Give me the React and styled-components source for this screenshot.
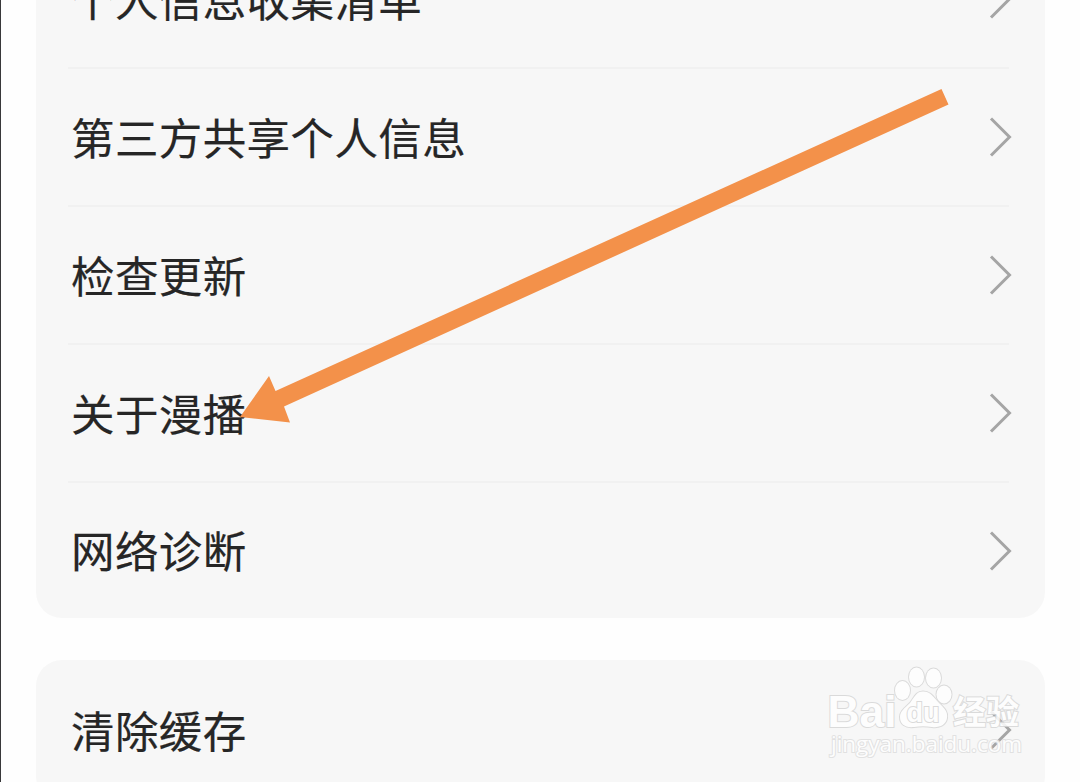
import React from "react";
import styled, { createGlobalStyle } from "styled-components";

const GlobalStyle = createGlobalStyle`
  * {
    box-sizing: border-box;
  }
  body {
    margin: 0;
    background: #fefefe;
    font-family: "Noto Sans CJK SC", sans-serif;
  }
`;
const Page = styled.div`
  position: relative;
  display: flex;
  flex-direction: column;
  gap: 42px;
  height: 782px;
  padding: 0 35px;
  border-left: 1px solid #38383a;
  overflow: hidden;
`;
const Card = styled.div`
  flex: none;
  width: 1009px;
  margin-top: ${(props) => props.$offset || "0"};
  padding: 0 36px 0 32px;
  background: #f7f7f7;
  border-radius: 26px;
`;
const Row = styled.div`
  display: flex;
  align-items: center;
  justify-content: space-between;
  height: ${(props) => props.$height || "138px"};
  padding: 0 0 0 3px;
  border-bottom: ${(props) => (props.$last ? "none" : "2px solid #f1f1f1")};
`;
const Label = styled.span`
  padding-bottom: 1px;
  font-size: 43.5px;
  line-height: 60px;
  letter-spacing: 0.4px;
  color: #262626;
  -webkit-text-stroke: 0.2px #262626;
  white-space: nowrap;
`;
const Chevron = styled.svg`
  flex: none;
  width: 24px;
  height: 40px;
  margin-right: -4px;
  fill: none;
  stroke: #a5a5a5;
  stroke-width: 3;
`;
const Arrow = styled.svg`
  position: absolute;
  left: 239px;
  top: 80px;
  width: 720px;
  height: 350px;
  fill: #f3914a;
`;
const Watermark = styled.svg`
  position: absolute;
  left: 819px;
  top: 660px;
  width: 210px;
  height: 104px;
  fill: #ffffff;
  stroke: #d6d6d6;
  stroke-width: 2;
  paint-order: stroke;
  opacity: 0.85;
`;
const Brand = styled.text`
  font: 700 ${(props) => props.$size} "Liberation Sans", "Noto Sans CJK SC", sans-serif;
`;
const Address = styled.text`
  font: 400 22px "Open Sans", sans-serif;
  stroke: #dedede;
`;

const privacyItems = [
  "个人信息收集清单",
  "第三方共享个人信息",
  "检查更新",
  "关于漫播",
  "网络诊断",
];

const ListRow = ({ text, last, height }) => {
  return (
    <Row $last={last} $height={height}>
      <Label>{text}</Label>
      <Chevron viewBox="0 0 24 40">
        <path d="M2 1.5 L20.5 20 L2 38.5" />
      </Chevron>
    </Row>
  );
};

const BaiduMark = () => {
  return (
    <Watermark viewBox="0 0 210 104">
      <Brand x="7.5" y="66.5" $size="45px" textLength="69" lengthAdjust="spacingAndGlyphs">
        Bai
      </Brand>
      <ellipse cx="82.500" cy="30.500" rx="7.500" ry="9.500" />
      <ellipse cx="96.500" cy="17" rx="7.500" ry="9.500" />
      <ellipse cx="113.500" cy="18" rx="7.500" ry="9.500" />
      <ellipse cx="124" cy="34.500" rx="7.500" ry="9" />
      <path d="M103 31.500 C111 31.500 114 38 119 43 C125 49 128 52 127 58 C126 65 119 68 112 67 C106 66 100 66 94 67 C85 68 80 64 80 57 C80 51 85 48 90 43 C94 38 96 31.500 103 31.500 Z" />
      <Brand x="86.5" y="62" $size="27px" textLength="33" lengthAdjust="spacingAndGlyphs">
        du
      </Brand>
      <Brand x="133" y="64" $size="33px" textLength="66" lengthAdjust="spacingAndGlyphs">
        经验
      </Brand>
      <Address x="11" y="92" textLength="191" lengthAdjust="spacingAndGlyphs">
        jingyan.baidu.com
      </Address>
    </Watermark>
  );
};

export default function App() {
  return (
    <>
      <GlobalStyle />
      <Page>
        <Card $offset="-69px">
          {privacyItems.map((item, index) => {
            const last = index === privacyItems.length - 1;
            return <ListRow key={item} text={item} last={last} height={last ? "135px" : "138px"} />;
          })}
        </Card>
        <Card>
          <ListRow text="清除缓存" height="142px" />
        </Card>
        <Arrow viewBox="0 0 720 350">
          <path d="M701.5 9 L708.5 24.5 L44 326.5 L50 342.5 L0 337 L29 296 L35.5 311 Z" />
        </Arrow>
        <BaiduMark />
      </Page>
    </>
  );
}
